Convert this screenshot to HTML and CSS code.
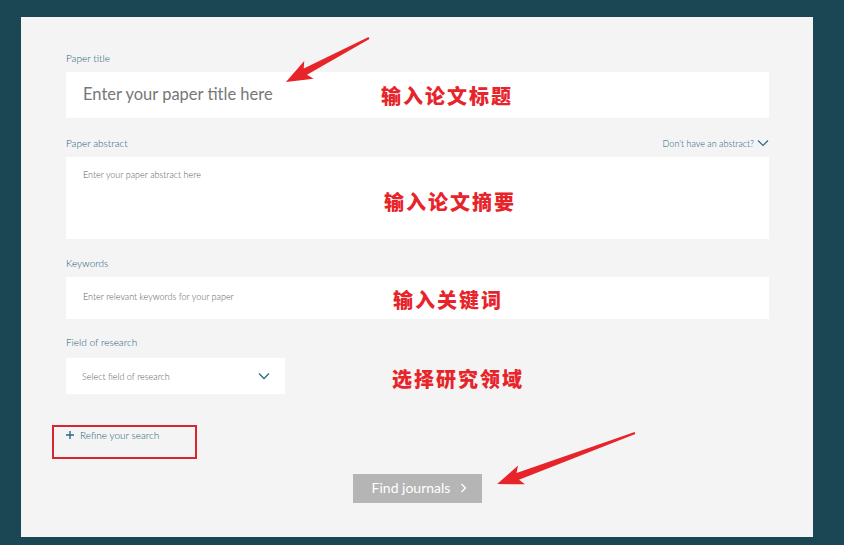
FILE: index.html
```html
<!DOCTYPE html>
<html lang="en">
<head>
    <meta charset="UTF-8">
    <meta name="viewport" content="width=device-width, initial-scale=1.0">
    <title>Journal Finder</title>
    <link rel="stylesheet" href="styles.css">
</head>
<body>
    <div class="panel">
        <form class="finder">
            <div class="field field-title">
                <label class="label" for="title">Paper title</label>
                <input class="input input-title" type="text" id="title" placeholder="Enter your paper title here">
            </div>

            <div class="field field-abstract">
                <div class="label-row">
                    <label class="label" for="abstract">Paper abstract</label>
                    <a class="toggle" href="#">Don't have an abstract?
                        <svg width="12" height="8" viewBox="0 0 12 8"><path d="M1 1.5 L6 6.5 L11 1.5" fill="none" stroke="#2a6a87" stroke-width="1.2"/></svg>
                    </a>
                </div>
                <textarea class="input input-abstract" id="abstract" placeholder="Enter your paper abstract here"></textarea>
            </div>

            <div class="field field-keywords">
                <label class="label" for="keywords">Keywords</label>
                <input class="input input-keywords" type="text" id="keywords" placeholder="Enter relevant keywords for your paper">
            </div>

            <div class="field field-research">
                <label class="label">Field of research</label>
                <div class="select">
                    <span>Select field of research</span>
                    <svg width="12" height="8" viewBox="0 0 12 8"><path d="M1 1.5 L6 6.5 L11 1.5" fill="none" stroke="#2a6a87" stroke-width="1.3"/></svg>
                </div>
            </div>

            <a class="refine" href="#">
                <svg width="8" height="8" viewBox="0 0 8 8"><path d="M4 0 V8 M0 4 H8" stroke="#2a6a87" stroke-width="1.4"/></svg>
                Refine your search
            </a>

            <div class="actions">
                <button type="button" class="submit">Find journals
                    <svg width="7" height="10" viewBox="0 0 7 10"><path d="M1.5 1 L5.5 5 L1.5 9" fill="none" stroke="#fff" stroke-width="1.3"/></svg>
                </button>
            </div>
        </form>

        <!-- annotations drawn over the form -->
        <svg class="arrows" width="792" height="520" viewBox="0 0 792 520">
            <polygon transform="translate(348 21) rotate(152.1)" points="0,-1 72,-3.5 68,-10 94,0 68,10 72,3.5 0,1" fill="#e8242b"/>
            <polygon transform="translate(614 416) rotate(159.7)" points="0,-1 125,-3.5 121,-10 147,0 121,10 125,3.5 0,1" fill="#e8242b"/>
        </svg>
        <span class="note note-title">输入论文标题</span>
        <span class="note note-abstract">输入论文摘要</span>
        <span class="note note-keywords">输入关键词</span>
        <span class="note note-research">选择研究领域</span>
        <div class="mark"></div>
    </div>
</body>
</html>
```

FILE: styles.css
```css
/* page */
body {
    margin: 0;
    width: 844px;
    height: 545px;
    overflow: hidden;
    background-color: #1b4654;
    font-family: Lato, "Open Sans", sans-serif;
}

.panel {
    position: relative;
    box-sizing: border-box;
    width: 792px;
    height: 520px;
    margin: 17px 0 0 21px;
    padding: 35px 44px 0 45px;
    background-color: #f4f4f4;
}

/* form fields */
.field {
    display: flex;
    flex-direction: column;
}

.label {
    display: block;
    height: 12px;
    line-height: 12px;
    font-size: 10px;
    font-weight: 300;
    color: #1d5d7a;
    margin-bottom: 8px;
}

.label-row {
    display: flex;
    justify-content: space-between;
    align-items: center;
}

.toggle {
    display: flex;
    align-items: center;
    gap: 3px;
    height: 12px;
    margin-bottom: 8px;
    font-size: 9px;
    font-weight: 300;
    color: #1d5d7a;
    text-decoration: none;
}

.input {
    box-sizing: border-box;
    width: 100%;
    border: none;
    outline: 0;
    background-color: #fff;
    font-family: Lato, "Open Sans", sans-serif;
    font-weight: 300;
    color: #333;
    padding: 0 17px;
}

.input::placeholder {
    color: #606060;
}

.input-title {
    height: 46px;
    font-size: 16.5px;
    font-weight: 400;
    padding-bottom: 3px;
}

.input-title::placeholder {
    color: #777;
}

.field-title {
    margin-bottom: 19px;
}

.input-abstract {
    height: 82px;
    resize: none;
    font-size: 9px;
    padding-top: 12px;
    line-height: 12px;
}

.field-abstract {
    margin-bottom: 18px;
}

.input-keywords {
    height: 42px;
    font-size: 9px;
    padding-bottom: 4px;
}

.field-keywords {
    margin-bottom: 17px;
}

.field-research .label {
    margin-bottom: 10px;
}

.select {
    box-sizing: border-box;
    width: 219px;
    height: 36px;
    display: flex;
    justify-content: space-between;
    align-items: center;
    padding: 0 15px 0 16px;
    background-color: #fff;
    font-size: 9px;
    font-weight: 300;
    color: #606060;
}

.refine {
    display: flex;
    align-items: center;
    gap: 6px;
    height: 12px;
    margin-top: 35px;
    font-size: 10px;
    font-weight: 300;
    color: #1d5d7a;
    text-decoration: none;
}

.actions {
    display: flex;
    justify-content: center;
    margin-top: 33px;
}

.submit {
    width: 129px;
    height: 29px;
    display: flex;
    justify-content: center;
    align-items: center;
    gap: 10px;
    border: none;
    background-color: #b5b5b5;
    color: #fff;
    font-family: Lato, "Open Sans", sans-serif;
    font-size: 14px;
    padding: 0 0 2px 4px;
}

/* red annotations */
.arrows {
    position: absolute;
    left: 0;
    top: 0;
    pointer-events: none;
}

.note {
    position: absolute;
    font-family: "Noto Sans CJK SC", sans-serif;
    font-weight: 900;
    font-size: 20px;
    line-height: 24px;
    letter-spacing: 2px;
    color: #e8242b;
}

.note-title { left: 360px; top: 67px; }
.note-abstract { left: 363px; top: 173px; }
.note-keywords { left: 372px; top: 271px; }
.note-research { left: 371px; top: 350px; }

.mark {
    position: absolute;
    left: 31px;
    top: 408px;
    width: 141px;
    height: 30px;
    border: 2px solid #d7262e;
}
```
